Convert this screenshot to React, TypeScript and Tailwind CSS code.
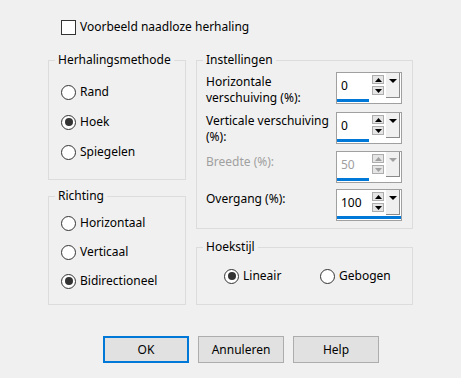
import React from "react";

function Radio({ label, checked }: { label: string; checked?: boolean }) {
  return (
    <div className="flex items-center">
      <span className="flex h-[15px] w-[15px] items-center justify-center rounded-full border border-[#333333] bg-white">
        {checked && <span className="h-[8px] w-[8px] rounded-full bg-[#333333]" />}
      </span>
      <span className="ml-[4px] leading-4">{label}</span>
    </div>
  );
}

function GroupBox({
  title,
  className,
  children,
}: {
  title: string;
  className: string;
  children: React.ReactNode;
}) {
  return (
    <div className={"relative border border-[#dcdcdc] " + className}>
      <span className="absolute -top-[9px] left-[6px] bg-[#f0f0f0] px-[3px] leading-4">{title}</span>
      {children}
    </div>
  );
}

function Tri({ up, color, w, h }: { up?: boolean; color: string; w: number; h: number }) {
  return (
    <svg width={w} height={h} viewBox={`0 0 ${w} ${h}`}>
      {up ? (
        <polygon points={`0,${h} ${w},${h} ${w / 2},0`} fill={color} />
      ) : (
        <polygon points={`0,0 ${w},0 ${w / 2},${h}`} fill={color} />
      )}
    </svg>
  );
}

function Spin({ value, full, disabled }: { value: string; full?: boolean; disabled?: boolean }) {
  const arrow = disabled ? "#a0a0a0" : "#000000";
  return (
    <div className="flex h-[32px] w-[66px] flex-col border border-[#a0a0a0] bg-white">
      <div className="flex h-[25px]">
        <div className={"w-[33px] pl-[4px] pt-[5px] leading-4 " + (disabled ? "text-[#a0a0a0]" : "text-black")}>
          {value}
        </div>
        <div className="ml-[2px] flex w-[12px] flex-col gap-[2px] pt-[2px]">
          <div className="flex h-[9px] items-center justify-center border border-[#adadad] bg-[#e5e5e5]">
            <Tri up color={arrow} w={7} h={4} />
          </div>
          <div className="flex h-[9px] items-center justify-center border border-[#adadad] bg-[#e5e5e5]">
            <Tri color={arrow} w={7} h={4} />
          </div>
        </div>
        <div className="ml-[2px] flex w-[14px] justify-center border-b border-r border-[#8a8a8a] bg-[#f0f0f0] pt-[6px]">
          <Tri color={arrow} w={8} h={4} />
        </div>
      </div>
      <div className="mt-[1px] h-[3px]">
        <div className={"h-full bg-[#0078d7] " + (full ? "w-full" : "w-1/2")} />
      </div>
    </div>
  );
}

export default function App() {
  return (
    <div className="flex h-[378px] w-[461px] flex-col bg-[#f0f0f0] font-['Noto_Sans',sans-serif] text-[12px] text-black">
      <div className="ml-[61px] mt-[19px] flex items-center">
        <span className="h-[15px] w-[15px] border border-[#333333] bg-white" />
        <span className="ml-[4px] leading-4">Voorbeeld naadloze herhaling</span>
      </div>

      <div className="ml-[48px] mt-[25px] flex gap-[10px]">
        <div className="flex w-[138px] flex-col">
          <GroupBox title="Herhalingsmethode" className="h-[120px] pl-[12px] pt-[23px]">
            <div className="flex flex-col gap-[14px]">
              <Radio label="Rand" />
              <Radio label="Hoek" checked />
              <Radio label="Spiegelen" />
            </div>
          </GroupBox>
          <GroupBox title="Richting" className="mt-[16px] h-[109px] pl-[12px] pt-[18px]">
            <div className="flex flex-col gap-[13px]">
              <Radio label="Horizontaal" />
              <Radio label="Verticaal" />
              <Radio label="Bidirectioneel" checked />
            </div>
          </GroupBox>
        </div>

        <div className="flex w-[217px] flex-col">
          <GroupBox title="Instellingen" className="h-[169px] pl-[9px] pt-[11px]">
            <div className="flex flex-col gap-[6px]">
              <div className="flex items-start">
                <div className="w-[130px] pt-[2px] leading-4">
                  Horizontale
                  <br />
                  verschuiving (%):
                </div>
                <Spin value="0" />
              </div>
              <div className="flex items-start">
                <div className="w-[130px] pt-[1px] leading-4">
                  Verticale verschuiving
                  <br />
                  (%):
                </div>
                <Spin value="0" />
              </div>
              <div className="flex items-start">
                <div className="w-[130px] pt-[3px] leading-4 text-[#a0a0a0]">Breedte (%):</div>
                <Spin value="50" disabled />
              </div>
              <div className="flex items-start">
                <div className="w-[130px] pt-[2px] leading-4">Overgang (%):</div>
                <Spin value="100" full />
              </div>
            </div>
          </GroupBox>
          <GroupBox title="Hoekstijl" className="mt-[18px] h-[58px] pl-[27px] pt-[20px]">
            <div className="flex">
              <div className="w-[96px]">
                <Radio label="Lineair" checked />
              </div>
              <Radio label="Gebogen" />
            </div>
          </GroupBox>
        </div>
      </div>

      <div className="ml-[103px] mt-[31px] flex gap-[9px]">
        <button className="flex h-[27px] w-[86px] items-center justify-center border-2 border-[#0078d7] bg-[#e1e1e1] leading-4">
          OK
        </button>
        <button className="flex h-[27px] w-[86px] items-center justify-center border border-[#adadad] bg-[#e1e1e1] leading-4">
          Annuleren
        </button>
        <button className="flex h-[27px] w-[86px] items-center justify-center border border-[#adadad] bg-[#e1e1e1] leading-4">
          Help
        </button>
      </div>
    </div>
  );
}
